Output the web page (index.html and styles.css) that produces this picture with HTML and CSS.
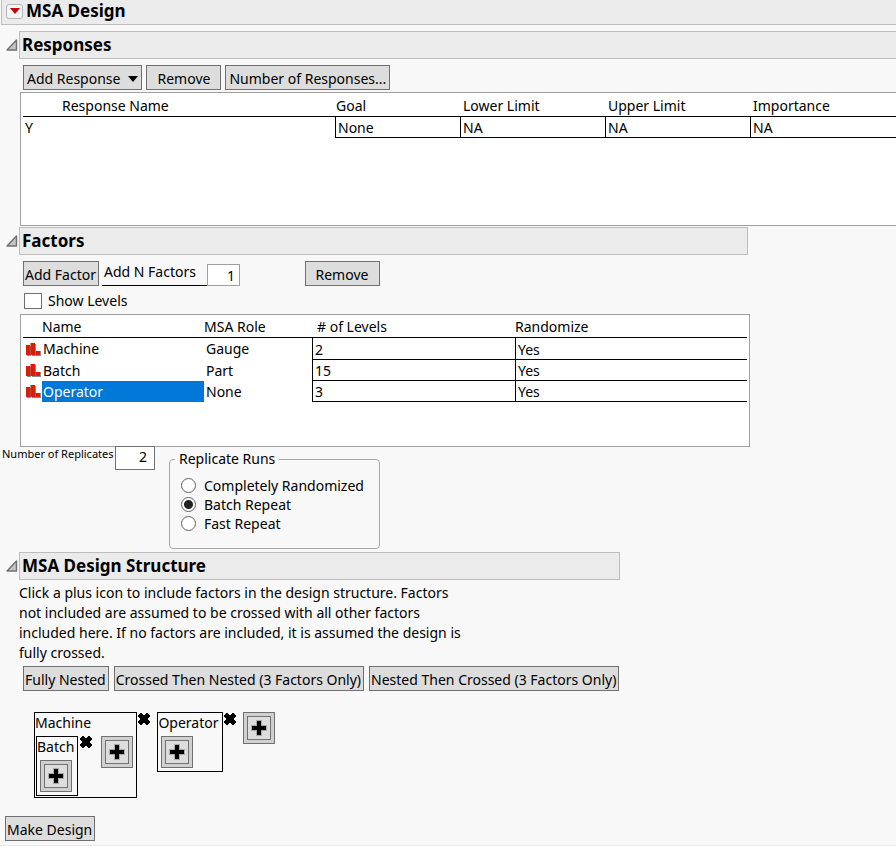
FILE: index.html
```html
<!DOCTYPE html>
<html lang="en">

<head>
    <meta charset="UTF-8">
    <meta name="viewport" content="width=device-width, initial-scale=1">
    <title>MSA Design</title>
    <link rel="stylesheet" href="styles.css">
</head>

<body>
    <!-- Shared icons -->
    <svg class="sprite" aria-hidden="true">
        <symbol id="disclosure" viewBox="0 0 12 12">
            <path d="M10.5 1v10H1z" fill="#c4c4c4" stroke="#707070" stroke-width="1.4" stroke-linejoin="round"/>
        </symbol>
        <symbol id="nominal" viewBox="0 0 16 15">
            <path d="M2 4h4v10H2zM7 2h4v12H7zM11 9h5v5h-5z" fill="#8c8c8c"/>
            <path d="M1 3h4v10H1zM5.5 1H10v12H5.5zM10.5 9H15v4h-4.500z" fill="#d81e05"/>
        </symbol>
        <symbol id="plus" viewBox="0 0 16 16">
            <path d="M5 0h6v5h5v6h-5v5H5v-5H0V5h5z" fill="#a9a9a9"/>
            <path d="M6 1h4v5h5v4h-5v5H6v-5H1V6h5z" fill="#000"/>
        </symbol>
        <symbol id="cross" viewBox="0 0 12 12">
            <path d="M2 0h2v1h1v1h2V1h1V0h2v1h1v1h1v2h-1v1h-1v2h1v1h1v2h-1v1h-1v1H8v-1H7v-1H5v1H4v1H2v-1H1v-1H0V8h1V7h1V5H1V4H0V2h1V1h1z" fill="#000"/>
        </symbol>
    </svg>

    <header class="title-bar">
        <button type="button" class="menu-button" aria-label="MSA Design menu">
            <svg width="10" height="6" viewBox="0 0 10 6"><path d="M0 0h10L5 6z" fill="#cc0000"/></svg>
        </button>
        <h1>MSA Design</h1>
    </header>

    <main>
        <!-- Responses -->
        <section class="responses-section">
            <div class="section-head">
                <button type="button" class="disclosure" aria-label="Toggle Responses"><svg><use href="#disclosure"/></svg></button>
                <h2>Responses</h2>
            </div>
            <div class="toolbar response-tools">
                <button type="button" class="btn">Add Response
                    <svg width="10" height="6" viewBox="0 0 10 6"><path d="M0 0h10L5 6z"/></svg>
                </button>
                <button type="button" class="btn btn-remove">Remove</button>
                <button type="button" class="btn">Number of Responses...</button>
            </div>
            <div class="table-box responses-box">
                <table class="grid responses">
                    <thead>
                        <tr>
                            <th class="col-response">Response Name</th>
                            <th class="col-goal">Goal</th>
                            <th class="col-limit">Lower Limit</th>
                            <th class="col-limit">Upper Limit</th>
                            <th class="col-importance">Importance</th>
                        </tr>
                    </thead>
                    <tbody>
                        <tr>
                            <td>Y</td>
                            <td class="cell">None</td>
                            <td class="cell">NA</td>
                            <td class="cell">NA</td>
                            <td class="cell">NA</td>
                        </tr>
                    </tbody>
                </table>
            </div>
        </section>

        <!-- Factors -->
        <section class="factors-section">
            <div class="section-head">
                <button type="button" class="disclosure" aria-label="Toggle Factors"><svg><use href="#disclosure"/></svg></button>
                <h2>Factors</h2>
            </div>
            <div class="toolbar factor-tools">
                <button type="button" class="btn">Add Factor</button>
                <div class="add-n">
                    <label for="nfactors">Add N Factors</label>
                    <input type="text" id="nfactors" class="number" value="1">
                </div>
                <button type="button" class="btn btn-remove">Remove</button>
            </div>
            <div class="check-row">
                <input type="checkbox" id="levels">
                <label for="levels">Show Levels</label>
            </div>
            <div class="table-box factors-box">
                <table class="grid factors">
                    <thead>
                        <tr>
                            <th class="col-icon"></th>
                            <th class="col-name">Name</th>
                            <th class="col-role">MSA Role</th>
                            <th class="col-levels"># of Levels</th>
                            <th class="col-randomize">Randomize</th>
                        </tr>
                    </thead>
                    <tbody>
                        <tr>
                            <td class="icon-cell"><svg><use href="#nominal"/></svg></td>
                            <td class="name">Machine</td>
                            <td>Gauge</td>
                            <td class="cell">2</td>
                            <td class="cell">Yes</td>
                        </tr>
                        <tr>
                            <td class="icon-cell"><svg><use href="#nominal"/></svg></td>
                            <td class="name">Batch</td>
                            <td>Part</td>
                            <td class="cell">15</td>
                            <td class="cell">Yes</td>
                        </tr>
                        <tr>
                            <td class="icon-cell"><svg><use href="#nominal"/></svg></td>
                            <td class="name selected">Operator</td>
                            <td>None</td>
                            <td class="cell">3</td>
                            <td class="cell">Yes</td>
                        </tr>
                    </tbody>
                </table>
            </div>
        </section>

        <!-- Replicates -->
        <div class="replicates">
            <label for="replicates">Number of Replicates</label>
            <input type="text" id="replicates" class="number" value="2">
            <fieldset>
                <legend>Replicate Runs</legend>
                <label><input type="radio" name="runs"> Completely Randomized</label>
                <label><input type="radio" name="runs" checked> Batch Repeat</label>
                <label><input type="radio" name="runs"> Fast Repeat</label>
            </fieldset>
        </div>

        <!-- Design structure -->
        <section class="structure-section">
            <div class="section-head">
                <button type="button" class="disclosure" aria-label="Toggle MSA Design Structure"><svg><use href="#disclosure"/></svg></button>
                <h2>MSA Design Structure</h2>
            </div>
            <p class="help">Click a plus icon to include factors in the design structure. Factors not included are assumed to be crossed with all other factors included here. If no factors are included, it is assumed the design is fully crossed.</p>
            <div class="toolbar presets">
                <button type="button" class="btn">Fully Nested</button>
                <button type="button" class="btn">Crossed Then Nested (3 Factors Only)</button>
                <button type="button" class="btn">Nested Then Crossed (3 Factors Only)</button>
            </div>
            <div class="structure">
                <div class="node">
                    <span>Machine</span>
                    <div class="children">
                        <div class="node">
                            <span>Batch</span>
                            <div class="children">
                                <button type="button" class="plus" aria-label="Add factor in Batch"><svg><use href="#plus"/></svg></button>
                            </div>
                        </div>
                        <button type="button" class="cross" aria-label="Remove Batch"><svg><use href="#cross"/></svg></button>
                        <button type="button" class="plus" aria-label="Add factor in Machine"><svg><use href="#plus"/></svg></button>
                    </div>
                </div>
                <button type="button" class="cross" aria-label="Remove Machine"><svg><use href="#cross"/></svg></button>
                <div class="node">
                    <span>Operator</span>
                    <div class="children">
                        <button type="button" class="plus" aria-label="Add factor in Operator"><svg><use href="#plus"/></svg></button>
                    </div>
                </div>
                <button type="button" class="cross" aria-label="Remove Operator"><svg><use href="#cross"/></svg></button>
                <button type="button" class="plus" aria-label="Add factor"><svg><use href="#plus"/></svg></button>
            </div>
        </section>
    </main>

    <footer>
        <button type="button" class="btn">Make Design</button>
    </footer>
</body>

</html>
```

FILE: styles.css
```css
* {
    box-sizing: border-box;
}

body {
    margin: 0;
    background-color: #f8f8f8;
    color: #000;
    font-family: "Noto Sans", "Open Sans", sans-serif;
    font-size: 14px;
    line-height: 20px;
}

button,
input {
    font: inherit;
    color: inherit;
    margin: 0;
}

button {
    padding: 0;
    border: none;
    background: none;
    white-space: nowrap;
}

svg {
    display: block;
    flex: none;
}

.sprite {
    display: none;
}

h1,
h2 {
    margin: 0;
    font-size: 17px;
    font-weight: bold;
}

/* Headings */
.title-bar {
    display: flex;
    align-items: center;
    gap: 3px;
    height: 25px;
    margin-left: 1px;
    padding: 0 0 2px 4px;
    background-color: #ebebeb;
    border: 1px solid #bdbdbd;
    border-width: 0 0 1px 1px;
}

.menu-button {
    display: flex;
    align-items: center;
    justify-content: center;
    width: 17px;
    height: 15px;
    border: 1px solid #b5b5b5;
    border-radius: 3px;
    background-color: #f4f4f4;
}

main {
    padding-top: 6px;
}

.section-head {
    display: flex;
    align-items: center;
}

.disclosure {
    width: 12px;
    height: 12px;
    margin: 0 1px 0 6px;
}

.disclosure svg {
    width: 12px;
    height: 12px;
}

.section-head h2 {
    flex: 1;
    height: 28px;
    padding-left: 2px;
    line-height: 26px;
    background-color: #ebebeb;
    border: 1px solid #bdbdbd;
}

.responses-section h2 {
    border-right: none;
}

/* Buttons */
.toolbar {
    display: flex;
    gap: 4px;
    padding: 6px 0 2px 23px;
}

.btn {
    display: flex;
    align-items: center;
    justify-content: center;
    gap: 8px;
    height: 25px;
    padding: 2px 2px 0 1px;
    background-color: #dddddd;
    border: 1px solid #707070;
}

.response-tools .btn {
    padding: 2px 3px 0;
}

.btn-remove {
    width: 75px;
}

/* Tables */
.table-box {
    margin-left: 20px;
    padding-left: 2px;
    background-color: #fff;
    border: 1px solid #a0a0a0;
}

.responses-box {
    height: 134px;
    border-right: none;
}

.factors-box {
    height: 133px;
    padding-right: 2px;
}

.grid {
    width: 100%;
    table-layout: fixed;
    border-spacing: 0;
}

.grid th {
    height: 24px;
    padding: 2px 0 0 3px;
    font-weight: normal;
    text-align: left;
    border-bottom: 1px solid #000;
}

.factors th {
    height: 23px;
}

.grid td {
    height: 21px;
    padding: 0 2px;
    line-height: 20px;
}

.grid .cell {
    padding-top: 1px;
    line-height: 19px;
    border-left: 1px solid #000;
    border-bottom: 1px solid #000;
}

.factors tbody tr:first-child td {
    height: 22px;
}

.grid .col-response {
    width: 312px;
    padding-left: 39px;
}

.grid .col-goal {
    width: 125px;
    padding-left: 1px;
}

.col-limit {
    width: 145px;
}

.col-icon {
    width: 19px;
}

.grid .col-name,
.grid .col-role,
.grid .col-randomize {
    padding-left: 0;
}

.grid .name {
    padding-left: 1px;
}

.col-name {
    width: 162px;
}

.col-role {
    width: 108px;
}

.grid .col-levels {
    width: 203px;
    padding-left: 5px;
}

.grid .icon-cell svg {
    width: 16px;
    height: 15px;
}

.grid .selected {
    background-color: #0078d7;
    color: #fff;
}

/* Factors */
.factors-section {
    width: 750px;
    max-width: 100%;
    margin-top: 1px;
}

.factors-section .section-head {
    margin-right: 2px;
}

.factor-tools {
    gap: 3px;
    padding-bottom: 4px;
}

.add-n {
    display: flex;
    align-items: flex-end;
    width: 200px;
}

.add-n label {
    width: 105px;
    height: 24px;
    padding-left: 2px;
    border-bottom: 1px solid #000;
}

.number {
    width: 33px;
    height: 22px;
    padding: 0 4px;
    text-align: right;
    background-color: #fff;
    border: 1px solid #a0a0a0;
}

.check-row {
    display: flex;
    align-items: center;
    gap: 6px;
    height: 22px;
    margin-bottom: 2px;
    padding-left: 24px;
}

.check-row input {
    appearance: none;
    width: 18px;
    height: 16px;
    background-color: #fff;
    border: 1px solid #707070;
}

/* Replicates */
.replicates {
    display: flex;
    align-items: flex-start;
    padding-left: 2px;
}

.replicates > label {
    width: 113px;
    font-size: 11px;
    line-height: 14px;
    white-space: nowrap;
}

.replicates .number {
    width: 40px;
    height: 24px;
    margin-top: -1px;
    padding: 0 7px 4px;
    border-color: #707070;
}

fieldset {
    width: 211px;
    height: 100px;
    margin: 2px 0 0 14px;
    padding: 7px 0 0 11px;
    border: 1px solid #a8a8a8;
    border-radius: 4px;
}

legend {
    margin-left: -6px;
    padding: 0 4px;
}

fieldset label {
    display: flex;
    align-items: center;
    gap: 8px;
    height: 19px;
}

fieldset input {
    appearance: none;
    width: 15px;
    height: 15px;
    border: 1px solid #606060;
    border-radius: 50%;
    background-color: #fff;
}

fieldset input:checked {
    background-image: radial-gradient(circle, #222 4px, #fff 5px);
}

/* Design structure */
.structure-section {
    width: 620px;
    max-width: 100%;
    margin-top: 3px;
}

.help {
    width: 450px;
    margin: 3px 0 0 19px;
}

.presets {
    gap: 5px;
    padding-top: 3px;
}

.structure {
    display: flex;
    align-items: flex-start;
    padding: 19px 0 0 34px;
}

.node {
    border: 1px solid #000;
}

.node > span {
    display: block;
    padding-right: 3px;
}

.children {
    display: flex;
    align-items: flex-start;
    padding: 3px;
}

.structure > .node:first-child > .children {
    padding: 3px 3px 1px 1px;
}

.cross {
    margin: 1px 7px 0 1px;
}

.children .cross {
    margin: 0 9px 0 2px;
}

.cross svg {
    width: 12px;
    height: 12px;
}

.plus {
    display: flex;
    align-items: center;
    justify-content: center;
    width: 32px;
    height: 32px;
    background-color: #dddddd;
    border: 1px solid #707070;
    box-shadow: inset 0 0 0 3px #d0d0d0, inset 0 0 0 4px #707070;
}

.plus svg {
    width: 16px;
    height: 16px;
}

footer {
    padding: 18px 0 4px 5px;
    border-bottom: 1px solid #e8e8e8;
}

footer .btn {
    padding: 2px 2px 0 1px;
}
```
